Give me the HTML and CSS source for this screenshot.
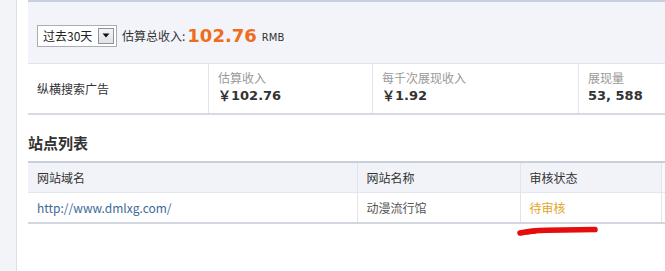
FILE: index.html
```html
<!DOCTYPE html>
<html lang="zh-CN">
<head>
<meta charset="utf-8">
<title>站点列表</title>
<link rel="stylesheet" href="styles.css">
</head>
<body>
<div class="page">
  <aside class="side"></aside>
  <main class="main">
    <section class="panel">
      <div class="panel-head">
        <div class="select"><span class="select-text">过去30天</span><span class="arrow"><svg width="8" height="5" viewBox="0 0 8 5"><path d="M0.5 0.5 H7.5 L4 4.5 Z" fill="#111"/></svg></span></div>
        <span class="total-label">估算总收入:</span>
        <span class="total">102.76</span>
        <span class="unit">RMB</span>
      </div>
      <div class="stats">
        <div class="cell cell-name">纵横搜索广告</div>
        <div class="cell cell-a"><div class="lbl">估算收入</div><div class="val">￥102.76</div></div>
        <div class="cell cell-b"><div class="lbl">每千次展现收入</div><div class="val">￥1.92</div></div>
        <div class="cell cell-c"><div class="lbl">展现量</div><div class="val">53, 588</div></div>
      </div>
    </section>
    <h2 class="title">站点列表</h2>
    <div class="table-wrap">
      <table class="sites">
        <colgroup><col class="c1"><col class="c2"><col class="c3"><col class="c4"></colgroup>
        <thead>
          <tr><th>网站域名</th><th>网站名称</th><th>审核状态</th><th></th></tr>
        </thead>
        <tbody>
          <tr><td><a class="link" href="#">http://www.dmlxg.com/</a></td><td class="sname">动漫流行馆</td><td class="status">待审核</td><td></td></tr>
        </tbody>
      </table>
      <svg class="mark" width="84" height="12" viewBox="0 0 84 12"><path d="M3 8 Q 14 5.5 30 5.2 L 78 4.6" fill="none" stroke="#e60d0d" stroke-width="5.5" stroke-linecap="round"/><path d="M3 8.2 L 18 6.8" fill="none" stroke="#e60d0d" stroke-width="4" stroke-linecap="round"/></svg>
    </div>
  </main>
</div>
</body>
</html>
```

FILE: styles.css
```css
html, body {
  margin: 0;
  padding: 0;
  background: #ffffff;
}
body {
  font-family: "Noto Sans CJK SC", "DejaVu Sans", sans-serif;
  font-size: 12px;
  color: #333333;
  overflow: hidden;
}
.page {
  display: flex;
  width: 665px;
  height: 271px;
  overflow: hidden;
}
.side {
  flex: 0 0 16px;
  background: #f3f4f7;
  border-right: 1px solid #dcdfe5;
}
.main {
  flex: 1;
  padding-left: 11px;
  min-width: 0;
}
.panel {
  width: 660px;
  border-top: 2px solid #c8d0df;
}
.panel-head {
  height: 55px;
  padding: 6px 0 0 9px;
  background: #f2f4f9;
  border-bottom: 1px solid #e1e4eb;
  display: flex;
  align-items: center;
}
.select {
  width: 76px;
  height: 20px;
  border: 1px solid #a9adb4;
  background: #ffffff;
  display: flex;
  align-items: center;
  justify-content: space-between;
  padding: 0 2px 0 5px;
  box-sizing: content-box;
  margin-right: 5px;
}
.select {
  width: 71px;
}
.select-text {
  font-size: 12px;
  color: #222;
  line-height: 20px;
}
.arrow {
  width: 14px;
  height: 14px;
  border: 1px solid #8e939b;
  background: linear-gradient(#f4f5f7, #dfe2e6);
  display: flex;
  align-items: center;
  justify-content: center;
}
.total-label {
  color: #333;
  font-size: 12px;
}
.total {
  font-family: "DejaVu Sans", sans-serif;
  font-weight: bold;
  font-size: 18px;
  color: #ef6c1a;
  margin-left: 2px;
  margin-right: 5px;
}
.unit {
  font-family: "DejaVu Sans", sans-serif;
  font-size: 10px;
  color: #333;
  padding-top: 3px;
}
.stats {
  display: flex;
  height: 49px;
  border-bottom: 2px solid #d6dae2;
}
.cell {
  border-right: 1px solid #e1e4ea;
  padding: 5px 0 0 9px;
  box-sizing: border-box;
}
.cell-name {
  width: 181px;
  display: flex;
  align-items: center;
  padding-top: 0;
  font-size: 12px;
  color: #333;
}
.cell-a { width: 164px; }
.cell-b { width: 206px; }
.cell-c { flex: 1; border-right: none; }
.lbl {
  font-size: 12px;
  line-height: 17px;
  color: #999999;
}
.val {
  font-family: "DejaVu Sans", sans-serif;
  font-weight: bold;
  font-size: 13px;
  line-height: 20px;
  color: #333333;
}
.title {
  margin: 18px 0 8px 0;
  font-size: 15px;
  line-height: 20px;
  font-weight: bold;
  color: #333;
}
.table-wrap {
  position: relative;
}
.sites {
  width: 660px;
  border-collapse: collapse;
  table-layout: fixed;
}
.c1 { width: 329px; }
.c2 { width: 163px; }
.c3 { width: 141px; }
.c4 { width: 27px; }
.sites th, .sites td {
  text-align: left;
  font-weight: normal;
  padding: 0 0 0 9px;
  height: 29px;
  font-size: 12px;
  border-right: 1px solid #e1e4ea;
}
.sites thead tr {
  border-top: 2px solid #c8cfdb;
  background: #f1f3f8;
  border-bottom: 1px solid #e3e6ec;
}
.sites thead th:last-child {
  background: #f8f9fb;
}
.sites tbody tr {
  border-bottom: 2px solid #d3d7df;
}
.sites th { color: #333; }
.link {
  color: #3c6a99;
  text-decoration: none;
}
.sname { color: #555; }
.status { color: #e3a41f; }
.mark {
  position: absolute;
  left: 489px;
  top: 64px;
}
```
